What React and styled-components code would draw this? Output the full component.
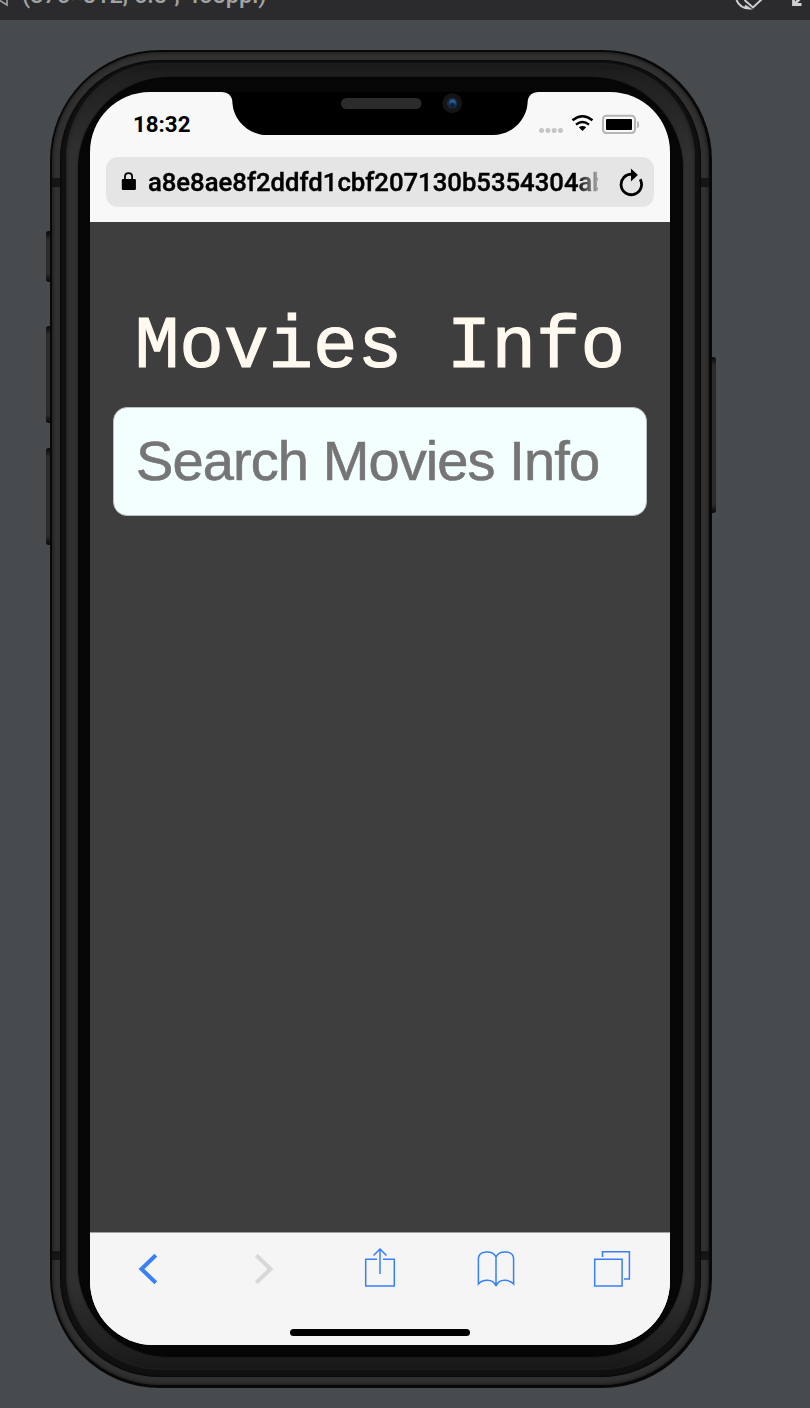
import React from "react";
import styled, { createGlobalStyle } from "styled-components";

const GlobalStyle = createGlobalStyle`
  * { box-sizing: border-box; }
  body { margin: 0; background: #474b4d; }
  svg { display: block; }
`;

const Simulator = styled.div`
  width: 810px;
  height: 1408px;
  overflow: hidden;
  background: #474b4d;
`;

const DeviceBar = styled.header`
  display: flex;
  justify-content: space-between;
  height: 20px;
  overflow: hidden;
  background: #2b2b2e;
`;

const DeviceSize = styled.div`
  display: flex;
  gap: 13px;
  margin-top: -19px;
  font: 500 23.5px/28px Roboto, sans-serif;
  color: #a2a2a3;
  white-space: nowrap;
`;

const DeviceActions = styled.div`
  display: flex;
`;

const Phone = styled.div`
  position: relative;
  width: 662px;
  height: 1338px;
  margin: 30px 0 0 50px;
`;

const Shell = styled.div`
  position: relative;
  height: 100%;
  padding: 2px 3px 3px 2px;
  border-radius: 110px;
  background: #080808;
`;

const Metal = styled.div`
  height: 100%;
  padding: 8px;
  border-radius: 108px;
  background: #303030;
  box-shadow: inset 0 0 3px 1px #1c1c1c;
`;

const Groove = styled.div`
  height: 100%;
  padding: 3px 6px 7px;
  border-radius: 100px;
  background: #101010;
  box-shadow: inset 0 0 1px 1px #090909;
`;

const Rim = styled.div`
  height: 100%;
  padding: 14px 12px 13px;
  border-radius: 95px;
  background: linear-gradient(#181818, #202020 14px, #303030 90px, #303030 1220px, #1e1e1e 1290px, #171717);
  box-shadow: inset 0 0 3px 1px #202020;
`;

const Bezel = styled.div`
  height: 100%;
  padding: 15px 13px 17px 12px;
  border-radius: 92px;
  background: #060606;
  box-shadow: 0 0 2px 0 #101010;
`;

const SideButton = styled.span`
  position: absolute;
  left: ${(p) => (p.$right ? "661px" : "-4px")};
  top: ${(p) => p.$top}px;
  width: 5px;
  height: ${(p) => p.$height}px;
  border-radius: ${(p) => (p.$right ? "0 3px 3px 0" : "3px 0 0 3px")};
  background: linear-gradient(#090909, #2d2d2d 9px, #2d2d2d calc(100% - 9px), #090909);
  box-shadow: inset 0 0 1px 0 #181818;
`;

const Seam = styled.span`
  position: absolute;
  left: ${(p) => (p.$right ? "651px" : "2px")};
  top: ${(p) => p.$top}px;
  width: 8px;
  height: 9px;
  background: #151515;
`;

const Screen = styled.div`
  position: relative;
  display: flex;
  flex-direction: column;
  width: 580px;
  height: 1253px;
  border-radius: 60px 60px 64px 64px;
  overflow: hidden;
  background: #f8f8f8;
`;

const StatusBar = styled.div`
  display: flex;
  align-items: center;
  justify-content: space-between;
  height: 65px;
  flex: none;
  padding: 0 31px 1px 43px;
`;

const Clock = styled.time`
  font: 700 22.3px/26px Roboto, sans-serif;
  color: #000;
`;

const StatusIcons = styled.div`
  display: flex;
`;

const Notch = styled.div`
  position: absolute;
  left: 131px;
  top: 0;
`;

const AddressBar = styled.div`
  display: flex;
  align-items: center;
  flex: none;
  height: 50px;
  margin: 0 16px 15px;
  padding: 0 10px 0 15px;
  border-radius: 12px;
  background: #e5e5e5;
`;

const Address = styled.div`
  width: 453px;
  margin: 0 20px 0 11px;
  overflow: hidden;
  white-space: nowrap;
  font: 500 25.7px/32px Roboto, sans-serif;
  color: #000;
  -webkit-text-stroke: 0.4px #000;
  mask-image: linear-gradient(90deg, #000 428px, transparent 458px);
`;

const Page = styled.main`
  flex: 1;
  padding: 83px 23px 0;
  background: #3e3e3e;
`;

const Title = styled.h1`
  margin: 0 0 18px;
  text-align: center;
  white-space: nowrap;
  font: 400 74.3px/84px "Courier New", "Liberation Mono", monospace;
  color: #fff9f0;
  -webkit-text-stroke: 1.2px #fff9f0;
`;

const Search = styled.input`
  display: block;
  width: 534px;
  height: 109px;
  padding: 0 22px 2px;
  border: 1px solid #b8c0c0;
  border-radius: 14px;
  outline: none;
  background: #f3ffff;
  font: 400 56px/64px "Liberation Sans", Arial, sans-serif;
  letter-spacing: -0.9px;
  &::placeholder {
    color: #757575;
    opacity: 1;
    -webkit-text-stroke: 0.6px #757575;
  }
`;

const BottomBar = styled.footer`
  flex: none;
  height: 113px;
  border-top: 1px solid #a0a0a0;
  background: #f5f5f5;
`;

const Tools = styled.nav`
  display: grid;
  grid-template-columns: repeat(5, 116px);
  justify-items: center;
  height: 96px;
  padding-top: 14px;
`;

const HomeIndicator = styled.div`
  width: 180px;
  height: 7px;
  margin: 0 auto;
  border-radius: 4px;
  background: #000;
`;

const Tool = ({ color = "#3880f8", strokeWidth = 1.5, children }) => (
  <svg width="40" height="42" viewBox="0 0 40 42" fill="none" stroke={color} strokeWidth={strokeWidth}>
    {children}
  </svg>
);

export default function App() {
  return (
    <Simulator>
      <GlobalStyle />
      <DeviceBar>
        <DeviceSize>
          <svg width="9" height="28" viewBox="0 0 9 28" fill="none" stroke="#a2a2a3" strokeWidth="1.6">
            <path d="M0 19.5 7 24V10" />
          </svg>
          <span>(375×812, 5.8″, 458ppi)</span>
        </DeviceSize>
        <DeviceActions>
          <svg width="78" height="20" viewBox="732 0 78 20" fill="none" stroke="#cfcfd1" strokeWidth="2">
            <path d="M736.5 0C739 6 744 8.5 749.5 8.5l-4.5-3M744.5 0l8.5 7.5L762 -1" />
            <path d="M793.5 -2v6.5h8M795 3.5l6-6" strokeWidth="2.8" />
          </svg>
        </DeviceActions>
      </DeviceBar>
      <Phone>
        <SideButton $top={181} $height={51} />
        <SideButton $top={276} $height={97} />
        <SideButton $top={398} $height={97} />
        <SideButton $right $top={307} $height={156} />
        <Shell>
          <Metal>
            <Groove>
              <Rim>
                <Bezel>
                  <Screen>
                    <StatusBar>
                      <Clock>18:32</Clock>
                      <StatusIcons>
                        <svg width="101" height="22" viewBox="538 114 101 22">
                          <g fill="#c5c5c5">
                            <circle cx="541.5" cy="131.5" r="2.5" />
                            <circle cx="547.9" cy="131.5" r="2.5" />
                            <circle cx="554.2" cy="131.5" r="2.5" />
                            <circle cx="560.5" cy="131.5" r="2.5" />
                          </g>
                          <g fill="none" stroke="#000" strokeWidth="2.4">
                            <path d="M572.5 121.2Q582.5 113.2 592.5 121.2" />
                            <path d="M576 125.6Q582.5 120.4 589 125.6" />
                          </g>
                          <path d="M578.8 128.3Q582.5 125.7 586.2 128.3L582.5 132z" />
                          <rect x="603" y="116.8" width="32" height="17.2" rx="3.4" fill="none" stroke="#b5b5b5" strokeWidth="2" />
                          <rect x="606" y="120" width="26" height="11" rx="1" />
                          <path d="M637 122.3c3 .6 3 6.2 0 6.8z" fill="#b5b5b5" />
                        </svg>
                      </StatusIcons>
                    </StatusBar>
                    <AddressBar>
                      <svg width="16" height="20" viewBox="121 172 16 20">
                        <path d="M125 180v-3.3c0-4.8 7.2-4.8 7.2 0v3.3" fill="none" stroke="#000" strokeWidth="1.8" />
                        <rect x="121.8" y="179" width="14.2" height="11" rx="1.2" />
                      </svg>
                      <Address>a8e8ae8f2ddfd1cbf207130b5354304abb</Address>
                      <svg width="26" height="30" viewBox="618 167 26 30">
                        <path d="M632 174.2A10.3 10.3 0 1 0 640.3 179.3" fill="none" stroke="#000" strokeWidth="2.8" />
                        <path d="M631 168.5l7 6.4-7 6.6z" />
                      </svg>
                    </AddressBar>
                    <Page>
                      <Title>Movies Info</Title>
                      <Search placeholder="Search Movies Info" />
                    </Page>
                    <BottomBar>
                      <Tools>
                        <Tool strokeWidth={4}><path d="M27.8 8.3 13.5 22l14.3 13.7" /></Tool>
                        <Tool color="#d8d8d8" strokeWidth={4}><path d="M12.2 8.3 26.5 22 12.2 35.7" /></Tool>
                        <Tool><path d="M17 12.2H5.7v26.9h28.6V12.2H23M20 27V2.5M13.5 8.5 20 2l6.5 6.5" /></Tool>
                        <Tool>
                          <path d="M20 39Q17.5 33 11 33.3 5.5 33.5 2.4 37V12C2.4 3 16.5 3 20 9.8 23.5 3 37.6 3 37.6 12V37Q34.5 33.5 29 33.3 22.5 33 20 39V9.8" />
                        </Tool>
                        <Tool><path d="M2.7 12.2h27.4v26.9H2.7zM10.5 10V4.8h26.9v27.3H32" /></Tool>
                      </Tools>
                      <HomeIndicator />
                    </BottomBar>
                    <Notch>
                      <svg width="318" height="44" viewBox="221 92 318 44">
                        <path d="M221 92Q232.5 92 232.5 104C234 121 249 135 267 135H493C511 135 526 121 527.5 104Q527.5 92 539 92z" />
                        <rect x="341" y="98" width="80.5" height="11" rx="5.5" fill="#2b2b2b" />
                        <circle cx="452.2" cy="103.2" r="10" fill="#151515" />
                        <circle cx="452.2" cy="103.2" r="5.4" fill="#172a48" />
                        <circle cx="452.6" cy="102.5" r="3.2" fill="#29568d" />
                        <circle cx="452.4" cy="105" r="2.2" fill="#101d3a" />
                      </svg>
                    </Notch>
                  </Screen>
                </Bezel>
              </Rim>
            </Groove>
          </Metal>
          <Seam $top={128} />
          <Seam $top={1201} />
          <Seam $right $top={128} />
          <Seam $right $top={1201} />
        </Shell>
      </Phone>
    </Simulator>
  );
}
